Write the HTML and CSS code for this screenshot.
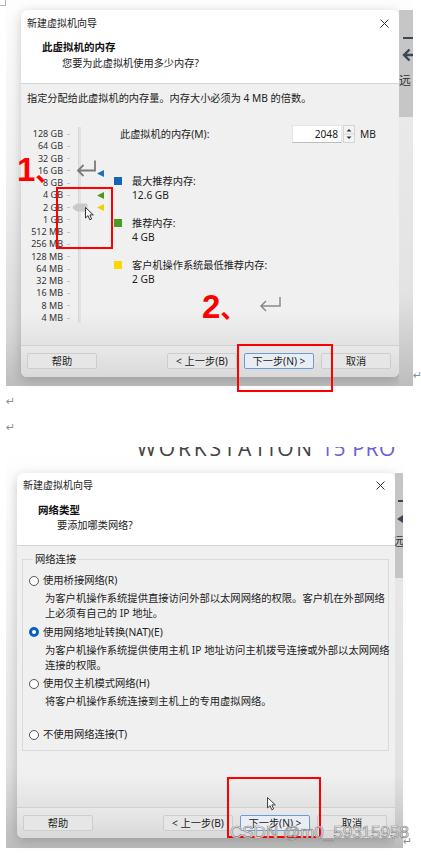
FILE: index.html
```html
<!DOCTYPE html>
<html lang="zh-CN">
<head>
<meta charset="utf-8">
<title>新建虚拟机向导</title>
<link rel="stylesheet" href="styles.css">
</head>
<body>
<div class="doc">
  <div class="corner"></div>

  <div class="para p-img1">
    <div class="shot shot1">
      <div class="dialog d1">
        <div class="head">
          <div class="titlebar">
            <span class="title">新建虚拟机向导</span>
            <svg class="close" width="9" height="9" viewBox="0 0 9 9"><path d="M0.5 0.5L8.5 8.5M8.5 0.5L0.5 8.5" stroke="#333" stroke-width="1" fill="none"/></svg>
          </div>
          <div class="h1">此虚拟机的内存</div>
          <div class="h2">您要为此虚拟机使用多少内存?</div>
        </div>
        <div class="body body1">
          <p class="intro">指定分配给此虚拟机的内存量。内存大小必须为 4 MB 的倍数。</p>
          <div class="mem">
            <div class="slider">
              <div class="labels">
                <span>128 GB</span><span>64 GB</span><span>32 GB</span><span>16 GB</span>
                <span>8 GB</span><span>4 GB</span><span>2 GB</span><span>1 GB</span>
                <span>512 MB</span><span>256 MB</span><span>128 MB</span><span>64 MB</span>
                <span>32 MB</span><span>16 MB</span><span>8 MB</span><span>4 MB</span>
              </div>
              <div class="ticks"></div>
              <div class="track"></div>
              <svg class="mk mk-blue" width="7" height="7" viewBox="0 0 7 7"><path d="M0 3.5L7 0V7Z" fill="#1b6ec2"/></svg>
              <svg class="mk mk-green" width="7" height="7" viewBox="0 0 7 7"><path d="M0 3.5L7 0V7Z" fill="#4a9a1e"/></svg>
              <svg class="mk mk-yellow" width="7" height="7" viewBox="0 0 7 7"><path d="M0 3.5L7 0V7Z" fill="#f2cf00"/></svg>
              <svg class="thumb" width="16" height="9" viewBox="0 0 16 9"><path d="M0.5 4.5Q0.5 3.6 1.5 3L4.5 0.8Q5 0.5 5.6 0.5H14.5Q15.5 0.5 15.5 1.5V7.5Q15.5 8.5 14.5 8.5H5.6Q5 8.5 4.5 8.2L1.5 6Q0.5 5.4 0.5 4.5Z" fill="#c9c9c9"/></svg>
              <svg class="cursor c1" width="9" height="14" viewBox="0 0 9 14"><path d="M0.5 0.5V11L3 8.6L4.8 12.8L6.6 12L4.9 7.9H8.3Z" fill="#fff" stroke="#333" stroke-width="1" stroke-linejoin="round"/></svg>
            </div>
            <div class="memright">
              <div class="memrow">
                <span class="memlabel">此虚拟机的内存(M):</span>
                <span class="input">2048</span>
                <svg class="spin" width="12" height="18" viewBox="0 0 12 18"><rect x="0.5" y="0.5" width="11" height="17" fill="#f3f3f3" stroke="#d4d4d4"/><path d="M0.5 9H11.5" stroke="#d4d4d4"/><path d="M3.5 6.5H8.5L6 4Z" fill="#333"/><path d="M3.5 11.5H8.5L6 14Z" fill="#333"/></svg>
                <span class="unit">MB</span>
              </div>
              <div class="legend">
                <div class="lg"><i class="sq sq-blue"></i><div>最大推荐内存:<br>12.6 GB</div></div>
                <div class="lg"><i class="sq sq-green"></i><div>推荐内存:<br>4 GB</div></div>
                <div class="lg"><i class="sq sq-yellow"></i><div>客户机操作系统最低推荐内存:<br>2 GB</div></div>
              </div>
            </div>
          </div>
        </div>
        <div class="foot">
          <span class="btn help">帮助</span>
          <span class="btn">&lt; 上一步(B)</span>
          <span class="btn primary">下一步(N) &gt;</span>
          <span class="btn">取消</span>
        </div>
      </div>
      <div class="strip strip1">
        <i class="dash"></i>
        <svg class="sarrow" width="11" height="14" viewBox="0 0 11 14"><path d="M11 7H2.5M7.5 1.5L2 7L7.5 12.5" stroke="#3b4656" stroke-width="2.4" fill="none"/></svg>
        <span class="yuan">远</span>
      </div>

      <span class="anno a1">1<span class="dun">、</span></span>
      <svg class="ret r1" width="22" height="20" viewBox="0 0 22 20"><path d="M20 1.5V11.5H3M8.5 6L3 11.5L8.5 17" stroke="#7a7a7a" stroke-width="1.8" fill="none"/></svg>
      <div class="redbox rb1"></div>
      <span class="anno a2">2<span class="dun">、</span></span>
      <svg class="ret r2" width="24" height="16" viewBox="0 0 24 16"><path d="M22 1V10H3M8 5L3 10L8 15" stroke="#8a8a8a" stroke-width="1.5" fill="none"/></svg>
      <div class="redbox rb2"></div>
    </div>
    <span class="pm pm1">↵</span>
  </div>

  <div class="para p-mark m1"><span class="pm">↵</span></div>
  <div class="para p-mark m2"><span class="pm">↵</span></div>

  <div class="para p-img2">
    <div class="shot shot2">
      <div class="ws"><span class="ws-text">WORKSTATION<span class="ws-pro"> 15 PRO</span></span></div>
      <div class="row2">
        <div class="dialog d2">
          <div class="head">
            <div class="titlebar">
              <span class="title">新建虚拟机向导</span>
              <svg class="close" width="9" height="9" viewBox="0 0 9 9"><path d="M0.5 0.5L8.5 8.5M8.5 0.5L0.5 8.5" stroke="#333" stroke-width="1" fill="none"/></svg>
            </div>
            <div class="h1">网络类型</div>
            <div class="h2">要添加哪类网络?</div>
          </div>
          <div class="body body2">
            <fieldset class="net">
              <legend>网络连接</legend>
              <div class="opt">
                <i class="radio"></i>
                <div class="opt-label">使用桥接网络(R)</div>
                <div class="opt-desc">为客户机操作系统提供直接访问外部以太网网络的权限。客户机在外部网络<br>上必须有自己的 IP 地址。</div>
              </div>
              <div class="opt">
                <i class="radio on"></i>
                <div class="opt-label">使用网络地址转换(NAT)(E)</div>
                <div class="opt-desc">为客户机操作系统提供使用主机 IP 地址访问主机拨号连接或外部以太网网络<br>连接的权限。</div>
              </div>
              <div class="opt opt-host">
                <i class="radio"></i>
                <div class="opt-label">使用仅主机模式网络(H)</div>
                <div class="opt-desc">将客户机操作系统连接到主机上的专用虚拟网络。</div>
              </div>
              <div class="opt opt-none">
                <i class="radio"></i>
                <div class="opt-label">不使用网络连接(T)</div>
              </div>
            </fieldset>
          </div>
          <div class="foot">
            <span class="btn help">帮助</span>
            <span class="btn">&lt; 上一步(B)</span>
            <span class="btn primary">下一步(N) &gt;</span>
            <span class="btn">取消</span>
          </div>
        </div>
        <div class="strip strip2">
          <i class="dash"></i>
          <svg class="sarrow" width="6" height="8" viewBox="0 0 6 8"><path d="M0 4L6 0V8Z" fill="#3b4656"/></svg>
          <span class="yuan">远</span>
        </div>
      </div>
      <div class="redbox rb3"></div>
      <svg class="cursor c2" width="9" height="14" viewBox="0 0 9 14"><path d="M0.5 0.5V11L3 8.6L4.8 12.8L6.6 12L4.9 7.9H8.3Z" fill="#fff" stroke="#444" stroke-width="1" stroke-linejoin="round"/></svg>
      <span class="wm">CSDN @m0_59315958</span>
    </div>
    <span class="pm pm2">↵</span>
  </div>
</div>
</body>
</html>
```

FILE: styles.css
```css
* { box-sizing: border-box; }
html, body { margin: 0; padding: 0; background: #fff; }
body {
  width: 421px;
  height: 855px;
  overflow: hidden;
  font-family: "Noto Sans", "Noto Sans CJK SC", sans-serif;
  color: #1c1c1c;
}
.doc { position: relative; }
.corner {
  position: absolute; left: 0; top: 0;
  width: 6px; height: 6px;
  border-right: 1px solid #b5b5b5; border-bottom: 1px solid #b5b5b5;
}

.para { display: flex; align-items: flex-end; padding-left: 6px; }
.pm {
  font-family: "DejaVu Sans", sans-serif;
  font-size: 11px;
  line-height: 16px;
  color: #8c8c8c;
}
.pm1 { margin-bottom: 2px; }
.pm2 { margin-bottom: -2px; }
.p-mark { height: 16px; }
.m1 { margin-top: 8px; }
.m2 { margin-top: 10px; }
.p-img2 { margin-top: 11px; }

/* screenshots */
.shot { position: relative; display: flex; }
.shot1 {
  width: 407px;
  height: 386px;
  padding: 10px 0 0 15px;
  background: linear-gradient(to bottom, #fdfdfd 0%, #f1f1f1 45%, #d9d9d9 85%, #bdbdbd 100%);
}
.shot2 {
  width: 397px;
  height: 401px;
  flex-direction: column;
  background: linear-gradient(to bottom, #ffffff 0%, #f6f6f6 30%, #e3e3e3 80%, #bcbcbc 100%);
}
.row2 { display: flex; flex: 1; padding-left: 11px; }

/* dialog */
.dialog {
  width: 378px;
  align-self: flex-start;
  background: #f0f0f0;
  border-radius: 7px 7px 6px 6px;
  box-shadow: 0 3px 12px rgba(0, 0, 0, 0.2);
  overflow: hidden;
  display: flex;
  flex-direction: column;
  flex-shrink: 0;
}
.d1 { height: 367px; }
.d2 { height: 365px; }

.head { background: #fff; border-bottom: 1px solid #d4d4d4; }
.titlebar {
  height: 24px;
  display: flex;
  justify-content: space-between;
  align-items: flex-start;
  padding: 6px 10px 0 6px;
}
.title { font-size: 10px; line-height: 14px; color: #222; }
.close { margin-top: 3px; }
.h1 { font-size: 10.5px; font-weight: 700; line-height: 14px; margin: 6px 0 0 21px; color: #111; }
.h2 { font-size: 10.2px; line-height: 14px; margin: 2px 0 0 41px; padding-bottom: 13px; color: #222; }
.d2 .titlebar { padding-top: 5px; }
.d2 .h1 { margin-top: 6px; margin-left: 21px; }
.d2 .h2 { margin-top: 1px; margin-left: 40px; padding-bottom: 13px; }

.body {
  height: 261px;
  background: linear-gradient(to bottom, #f0f0f0 0, #f0f0f0 228px, #e2e2e2 261px);
}
.body1 { padding-top: 7px; font-size: 10.2px; }
.intro { margin: 0 0 0 6px; line-height: 14px; color: #222; }

.mem { display: flex; margin-top: 23px; }
.slider { position: relative; width: 93px; display: flex; flex-shrink: 0; }
.labels { margin-left: 6px; width: 36px; }
.labels span {
  display: block;
  height: 12.27px;
  line-height: 12.27px;
  font-size: 9px;
  text-align: right;
  color: #333;
  white-space: nowrap;
}
.ticks {
  width: 3px;
  height: 196px;
  margin-left: 4px;
  background: repeating-linear-gradient(to bottom, transparent 0, transparent 5.6px, #c4c4c4 5.6px, #c4c4c4 6.6px, transparent 6.6px, transparent 12.27px);
}
.track {
  width: 3px;
  height: 196px;
  margin: -1px 0 0 8px;
  background: #e2e2e2;
  border-left: 1px solid #d6d6d6;
}
.mk { position: absolute; left: 76px; }
.mk-blue { top: 42px; }
.mk-green { top: 64px; }
.mk-yellow { top: 76px; }
.thumb { position: absolute; left: 51px; top: 75px; }
.cursor { position: absolute; }
.c1 { left: 64px; top: 79px; }

.memright { flex: 1; margin-top: -3px; }
.memrow { display: flex; align-items: center; height: 18px; padding-left: 6px; }
.memlabel { width: 172px; line-height: 14px; }
.input {
  width: 50px;
  height: 18px;
  background: #fff;
  border: 1px solid #e4e4e4;
  border-bottom-color: #bdbdbd;
  text-align: right;
  padding-right: 3px;
  line-height: 16px;
}
.spin { margin-left: 1px; }
.unit { margin-left: 5px; line-height: 14px; }
.legend { margin-top: 31px; }
.lg { display: grid; grid-template-columns: 8px auto; column-gap: 10px; line-height: 14px; }
.lg + .lg { margin-top: 14px; }
.sq { display: block; width: 8px; height: 8px; margin-top: 3px; }
.sq-blue { background: #1565b4; }
.sq-green { background: #4b9a23; }
.sq-yellow { background: #ffd700; }

/* footer */
.foot {
  border-top: 1px solid #d0d0d0;
  padding: 7px 8px 8px 6px;
  display: flex;
  gap: 7px;
  background: linear-gradient(to bottom, #e9e9e9, #d9d9d9);
  flex: 1;
}
.d2 .foot { padding-bottom: 7px; }
.btn {
  width: 70px;
  height: 16px;
  border: 1px solid #cdcdcd;
  border-radius: 2px;
  background: #e6e6e6;
  font-size: 10.2px;
  line-height: 14px;
  text-align: center;
  color: #222;
}
.btn.help { margin-right: auto; }
.btn.primary { border-color: #6c9bd2; background: #e9eef5; }

/* network dialog */
.body2 { padding: 6px 6px 0 5px; font-size: 10.3px; }
.net {
  margin: 0;
  border: 1px solid #dadada;
  padding: 6px 6px 8px 6px;
  min-inline-size: 0;
}
.net legend {
  font-size: 10.3px;
  line-height: 15px;
  padding: 0 2px;
  margin-left: 4px;
  color: #222;
}
.opt {
  display: grid;
  grid-template-columns: 10px 1fr;
  column-gap: 4px;
  line-height: 15px;
  color: #222;
}
.opt + .opt { margin-top: 3.5px; }
.opt-host + .opt-none { margin-top: 18px; }
.radio {
  display: block;
  width: 10px;
  height: 10px;
  margin-top: 2.5px;
  border: 1px solid #555;
  border-radius: 50%;
  background: #fff;
}
.radio.on { border: 3px solid #0a5fc4; }
.opt-desc { grid-column: 2; margin-top: 3px; padding-left: 2px; white-space: nowrap; }

/* background app strips */
.strip { display: flex; flex-direction: column; overflow: hidden; flex-shrink: 0; }
.strip1 {
  width: 14px;
  padding-top: 27px;
  background: linear-gradient(to bottom, #c6c6c6 0, #c6c6c6 107px, #e9e9e9 107px, #e3e3e3 75%, #bdbdbd 100%);
}
.strip1 .dash { display: block; width: 10px; height: 2px; margin-left: 4px; background: #3b4656; }
.strip1 .sarrow { margin: 9px 0 0 3px; }
.strip1 .yuan { font-size: 12px; line-height: 14px; margin-top: 12px; color: #333; white-space: nowrap; }
.strip2 {
  width: 8px;
  padding-top: 27px;
  background: linear-gradient(to bottom, #c5c5c5 0, #c5c5c5 105px, #e7e7e7 105px, #e2e2e2 80%, #bcbcbc 100%);
}
.strip2 .dash { display: block; width: 5px; height: 2px; margin-left: 3px; background: #3b4656; }
.strip2 .sarrow { margin: 13px 0 0 2px; }
.strip2 .yuan { font-size: 12px; line-height: 14px; margin-top: 12px; margin-left: -3px; color: #333; white-space: nowrap; }

/* workstation banner (top of the picture is cropped) */
.ws { height: 26px; overflow: hidden; display: flex; justify-content: flex-end; align-items: flex-start; padding-right: 7px; }
.ws-text {
  font-family: "Open Sans", sans-serif;
  font-weight: 400;
  font-size: 21px;
  line-height: 24px;
  letter-spacing: 2.8px;
  margin-top: -11px;
  color: #444;
  white-space: nowrap;
}
.ws-pro { color: #6b5fd3; letter-spacing: 0.6px; }

/* annotations */
.anno {
  position: absolute;
  font-family: "Liberation Sans", "Noto Sans CJK SC", sans-serif;
  font-weight: 700;
  font-size: 33px;
  line-height: 1;
  color: #ff0000;
  white-space: nowrap;
}
.dun { font-family: "Noto Sans CJK SC", sans-serif; font-weight: 700; font-size: 26px; }
.a1 { left: 11px; top: 153px; }
.a2 { left: 196px; top: 290px; }
.ret { position: absolute; }
.r1 { left: 69px; top: 159px; }
.r2 { left: 252px; top: 296px; }
.redbox { position: absolute; border: 2px solid #f00; }
.rb1 { left: 50px; top: 187px; width: 57px; height: 62px; }
.rb2 { left: 231px; top: 344px; width: 96px; height: 48px; }
.rb3 { left: 221px; top: 330px; width: 94px; height: 61px; }
.c2 { left: 261px; top: 350px; }
.wm {
  position: absolute;
  left: 224px;
  top: 376px;
  font-family: "Liberation Sans", sans-serif;
  font-size: 17px;
  line-height: 20px;
  color: rgba(255, 255, 255, 0.92);
  -webkit-text-stroke: 0.7px #8a8a8a;
  white-space: nowrap;
}
```
